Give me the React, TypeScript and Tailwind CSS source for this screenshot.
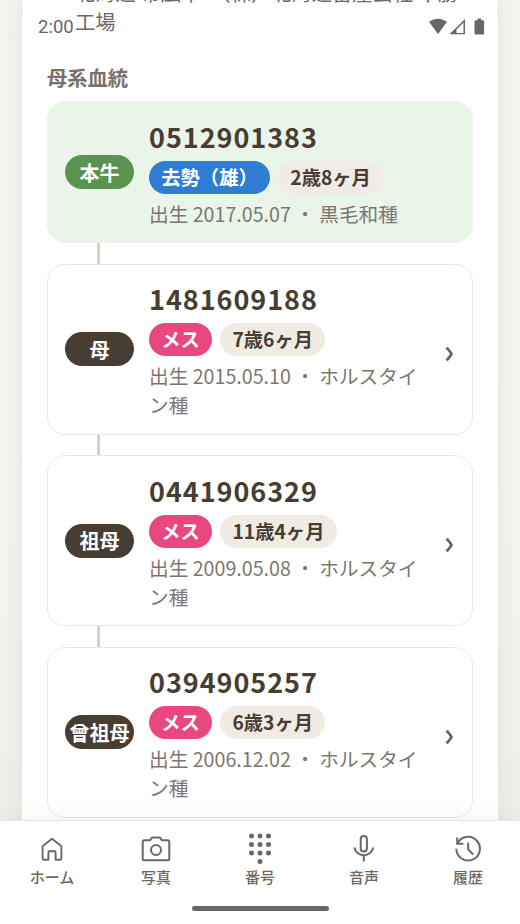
import React from "react";

type Animal = {
  role: string;
  id: string;
  sex: string;
  age: string;
  birth: string;
  breed: string;
  current?: boolean;
};

const lineage: Animal[] = [
  { role: "本牛", id: "0512901383", sex: "去勢（雄）", age: "2歳8ヶ月", birth: "2017.05.07", breed: "黒毛和種", current: true },
  { role: "母", id: "1481609188", sex: "メス", age: "7歳6ヶ月", birth: "2015.05.10", breed: "ホルスタイン種" },
  { role: "祖母", id: "0441906329", sex: "メス", age: "11歳4ヶ月", birth: "2009.05.08", breed: "ホルスタイン種" },
  { role: "曾祖母", id: "0394905257", sex: "メス", age: "6歳3ヶ月", birth: "2006.12.02", breed: "ホルスタイン種" },
];

function AnimalCard({ animal }: { animal: Animal }) {
  const { current } = animal;
  return (
    <div
      className={`flex w-full items-center rounded-[18px] border pl-[17px] ${
        current ? "h-[142px] border-[#ebf4e9] bg-[#ebf4e9]" : "h-[171px] border-[#ebe8e3] bg-white"
      }`}
    >
      <div
        className={`flex h-[34px] w-[69px] shrink-0 items-center justify-center rounded-full pt-px text-[20px] font-bold whitespace-nowrap text-white ${
          current ? "bg-[#5a934f]" : "bg-[#473d33]"
        }`}
      >
        {animal.role}
      </div>
      <div className="ml-[15px] w-[280px] pt-[2px]">
        <div className="text-[27px] leading-[36px] font-bold tracking-[0.95px] text-[#473d33]">{animal.id}</div>
        <div className="mt-[6px] flex gap-2 text-[19.3px] leading-[33px] font-bold">
          <span className={`rounded-full px-[12.3px] text-white ${current ? "bg-[#2f7cd3]" : "bg-[#e8487f]"}`}>{animal.sex}</span>
          <span className={`rounded-full px-[12.3px] text-[#473d33] ${current ? "bg-[#f0ebe5]" : "bg-[#f0ebe3]"}`}>{animal.age}</span>
        </div>
        <div className="mt-[5px] text-[19.65px] leading-[29px] text-[#7d7671]">
          {`出生 ${animal.birth} ・ ${animal.breed}`}
        </div>
      </div>
      {!current && (
        <svg className="mt-[9px] ml-[16px] h-[16px] w-[9px]" viewBox="0 0 9 16" fill="none" stroke="#6b645e" strokeWidth="2.8">
          <path d="M1.6 1.6 Q5.6 6 6.4 8 Q5.6 10 1.6 14.4" />
        </svg>
      )}
    </div>
  );
}

function HomeIcon() {
  return (
    <svg width="30" height="30" viewBox="0 0 30 30" fill="none" stroke="#6f6761" strokeWidth="1.9" strokeLinejoin="round">
      <path d="M5.6 11.2 15 3.8l9.4 7.4v11.9a1.7 1.7 0 0 1-1.7 1.7h-4.1v-7.6a1 1 0 0 0-1-1h-5.2a1 1 0 0 0-1 1v7.6H7.3a1.7 1.7 0 0 1-1.7-1.7z" />
    </svg>
  );
}

function CameraIcon() {
  return (
    <svg width="30" height="30" viewBox="0 0 30 30" fill="none" stroke="#6f6761" strokeWidth="2" strokeLinejoin="round">
      <path d="M3.2 5.3h6l1.4-2.2a1.5 1.5 0 0 1 1.2-.7h6.4a1.5 1.5 0 0 1 1.2.7l1.4 2.2h6a1.5 1.5 0 0 1 1.5 1.5v17a1.5 1.5 0 0 1-1.5 1.5H3.2a1.5 1.5 0 0 1-1.5-1.5v-17a1.5 1.5 0 0 1 1.5-1.5z" />
      <circle cx="15" cy="15" r="5" />
    </svg>
  );
}

function KeypadIcon() {
  return (
    <svg className="overflow-visible" width="30" height="30" viewBox="0 0 30 30" fill="#6f6761">
      {[1, 9.5, 18].map((y) => [6.5, 15, 23.5].map((x) => <circle key={`${x}-${y}`} cx={x} cy={y} r="2.5" />))}
      <circle cx="15" cy="26.5" r="2.5" />
    </svg>
  );
}

function MicIcon() {
  return (
    <svg width="30" height="30" viewBox="0 0 30 30" fill="none" stroke="#6f6761" strokeWidth="2">
      <rect x="11.7" y="1" width="6.2" height="15.5" rx="3.1" />
      <path d="M5.4 12.5a9.5 9 0 0 0 18.8 0M14.8 20.6v6" />
    </svg>
  );
}

function HistoryIcon() {
  return (
    <svg width="30" height="30" viewBox="0 0 30 30" fill="none" stroke="#6f6761" strokeWidth="2">
      <path d="M4.2 2.6v6.2h6.2M4.4 8.7A11.8 11.8 0 1 1 3.3 13.8M15.2 7.5v7l5 5" />
    </svg>
  );
}

const tabs = [
  { label: "ホーム", Icon: HomeIcon },
  { label: "写真", Icon: CameraIcon },
  { label: "番号", Icon: KeypadIcon },
  { label: "音声", Icon: MicIcon },
  { label: "履歴", Icon: HistoryIcon },
];

export default function App() {
  return (
    <div
      lang="ja"
      className="relative flex h-[924px] w-[520px] flex-col overflow-hidden bg-linear-to-b from-[#f2f5ef] via-[#f5f5f1] to-[#f1eee8] font-['Noto_Sans_CJK_JP',sans-serif]"
    >
      <main className="mx-[21px] h-[820px] overflow-hidden border-x border-[#e9e7e1] bg-white px-[25px] shadow-[0_6px_22px_rgba(80,70,50,0.09)]">
        <div className="-mt-[22px] pl-[28px] text-[20.3px] leading-[29px] whitespace-nowrap text-[#6f6761]">
          {"北海道 帯広市 \u00a0（株）北海道畜産公社 十勝"}
          <br />
          工場
        </div>
        <h2 className="mt-[27px] text-[20.3px] leading-[28px] font-bold text-[#78706a]">母系血統</h2>
        <div className="mt-[10px]">
          {lineage.map((animal, i) => (
            <React.Fragment key={animal.id}>
              {i > 0 && <div className="ml-[50px] h-[20.5px] w-[2.5px] bg-[#d6d1ca]" />}
              <AnimalCard animal={animal} />
            </React.Fragment>
          ))}
        </div>
      </main>

      <nav className="relative flex h-[104px] shrink-0 flex-col border-t border-[#ebe8e1] bg-white shadow-[0_-4px_18px_rgba(60,50,40,0.05)]">
        <div className="grid grid-cols-5 pt-[14px]">
          {tabs.map(({ label, Icon }) => (
            <div key={label} className="flex flex-col items-center">
              <Icon />
              <span className="-mt-px text-[15px] leading-[26px] font-medium text-[#6f6761]">{label}</span>
            </div>
          ))}
        </div>
        <div className="mx-auto mt-[16px] h-[5px] w-[137px] rounded-full bg-[#686868]" />
      </nav>

      <div className="absolute inset-x-0 top-0 h-[52px] font-[Roboto,sans-serif] text-[#666]">
        <span className="absolute top-[14.5px] left-[38px] text-[18.5px] leading-[25px]">2:00</span>
        <svg className="absolute top-[17px] left-[428px]" width="58" height="19" viewBox="0 0 58 19" fill="#666">
          <path d="M1 4.8Q10 -1.2 19 4.8L10 17z" />
          <path fillRule="evenodd" d="M21.5 17.3 37 2v15.3zm7-1.3h7V5.6l-7 7z" />
          <path d="M47.5 3.2h2V1.5h3.6v1.7h2q1 0 1 1v12.4q0 1-1 1h-7.6q-1 0-1-1V4.2q0-1 1-1z" />
        </svg>
      </div>
    </div>
  );
}
